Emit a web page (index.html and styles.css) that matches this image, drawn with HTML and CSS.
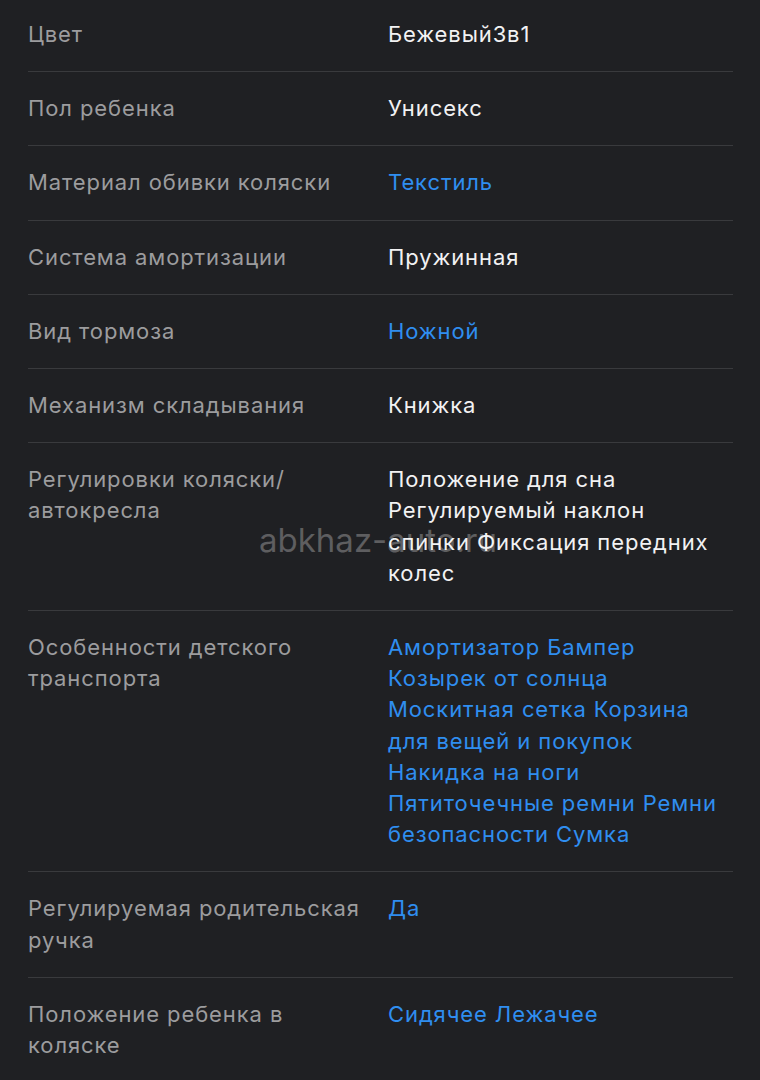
FILE: index.html
```html
<!DOCTYPE html>
<html lang="ru">
<head>
<meta charset="utf-8">
<link rel="stylesheet" href="styles.css">
</head>
<body>
<div class="page">
  <div class="specs">
    <div class="row"><div class="label">Цвет</div><div class="value">БежевыйЗв1</div></div>
    <div class="row"><div class="label">Пол ребенка</div><div class="value">Унисекс</div></div>
    <div class="row"><div class="label">Материал обивки коляски</div><div class="value link">Текстиль</div></div>
    <div class="row"><div class="label">Система амортизации</div><div class="value">Пружинная</div></div>
    <div class="row"><div class="label">Вид тормоза</div><div class="value link">Ножной</div></div>
    <div class="row"><div class="label">Механизм складывания</div><div class="value">Книжка</div></div>
    <div class="row"><div class="label">Регулировки коляски/ автокресла</div><div class="value">Положение для сна Регулируемый наклон спинки Фиксация передних колес</div></div>
    <div class="row"><div class="label">Особенности детского транспорта</div><div class="value link">Амортизатор Бампер Козырек от солнца Москитная сетка Корзина для вещей и покупок Накидка на ноги Пятиточечные ремни Ремни безопасности Сумка</div></div>
    <div class="row"><div class="label">Регулируемая родительская ручка</div><div class="value link">Да</div></div>
    <div class="row last"><div class="label">Положение ребенка в коляске</div><div class="value link">Сидячее Лежачее</div></div>
  </div>
  <div class="watermark">abkhaz-auto.ru</div>
</div>
</body>
</html>
```
FILE: styles.css
```css
html, body {
  margin: 0;
  padding: 0;
  background: #1f2023;
}
body {
  font-family: Inter, "Noto Sans", sans-serif;
  font-size: 22px;
  letter-spacing: 0.9px;
  line-height: 31.2px;
}
.page {
  position: relative;
  width: 760px;
  height: 1080px;
  overflow: hidden;
}
.specs {
  margin: -2px 27px 0 28px;
}
.row {
  display: grid;
  grid-template-columns: 340px 1fr;
  column-gap: 20px;
  padding: 21px 0 21px;
  border-bottom: 1px solid #393a3d;
}
.row.last {
  border-bottom: none;
}
.label {
  color: #9c9c9e;
}
.value {
  color: #f2f2f3;
  padding-right: 12px;
}
.value.link {
  color: #2f8ef0;
}
.watermark {
  position: absolute;
  left: 259px;
  top: 519px;
  font-size: 33px;
  line-height: 42px;
  letter-spacing: 0;
  color: rgba(255, 255, 255, 0.28);
  pointer-events: none;
}
```
